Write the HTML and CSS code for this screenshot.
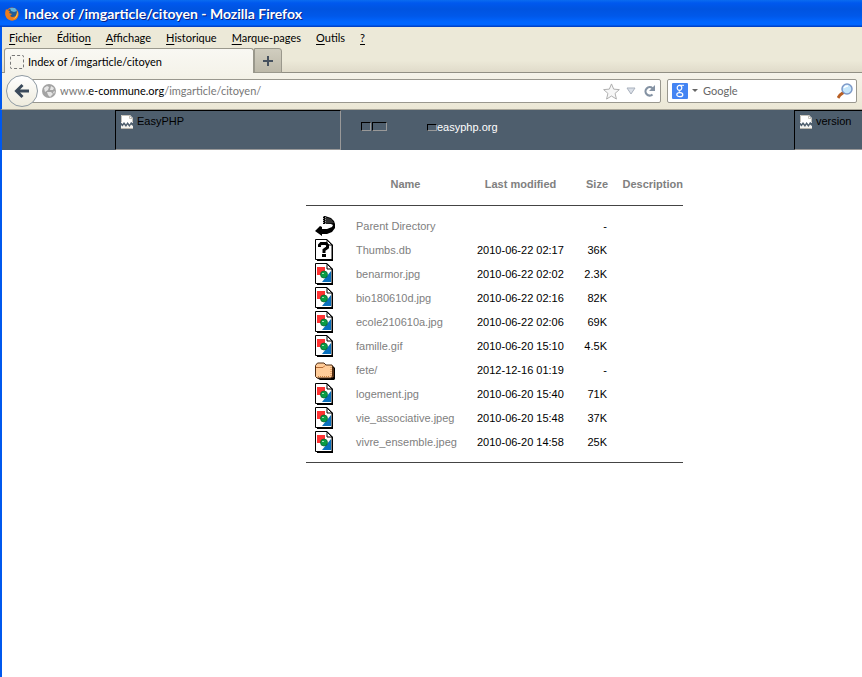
FILE: index.html
```html
<!DOCTYPE html>
<html lang="fr">
<head>
<meta charset="utf-8">
<title>Index of /imgarticle/citoyen</title>
<link rel="stylesheet" href="styles.css">
</head>
<body>
<svg class="defs" aria-hidden="true">
  <symbol id="broken" viewBox="0 0 12 14">
    <path d="M0 0h9l3 3v5l-2-1-1.500 2.500L6.500 7 5 9.500 3 7 1.500 9 0 7.500z" fill="#fff"/>
    <path d="M.5 7V.5h8l3 3V7M8.500.5v3h3" fill="none" stroke="#c4c1b9"/>
    <path d="M0 10l1.500 1.500L3 9.500l2 2.500 1.500-2.500 2 2.500L10 9.500l2 1.500v3H0z" fill="#f4f3ef"/>
    <path d="M0 13.500h12" stroke="#b7b4ac"/>
  </symbol>
  <symbol id="sheet" viewBox="0 0 20 22">
    <path d="M2 20h15V6h1v16H2z" fill="#000"/>
    <path d="M.5.5h11.500l5 5v15H.5z" fill="#fff" stroke="#000"/>
    <path d="M12 .5V6h5.500M12 1l5 5" fill="none" stroke="#000"/>
  </symbol>
  <symbol id="image" viewBox="0 0 20 22">
    <use href="#sheet" width="20" height="22"/>
    <path d="M2 4h8v8H2z" fill="#f33"/>
    <path d="M16 8v11H7z" fill="#0870bd"/>
    <circle cx="9" cy="11.500" r="3.500" fill="#0a9d45" stroke="#075c28" stroke-width=".7"/>
    <path d="M7 10.500h2" stroke="#9fe0b4"/>
  </symbol>
  <symbol id="unknown" viewBox="0 0 20 22">
    <use href="#sheet" width="20" height="22"/>
    <path d="M4.500 8V6l1.500-1.500h5L12.500 6v2.500L9 11v3" fill="none" stroke="#000" stroke-width="3"/>
    <path d="M7 15h4v3H7z"/>
  </symbol>
  <symbol id="back" viewBox="0 0 20 22">
    <path d="M8 1h2l6 2 3 3 1 3v4l-3 4-5 2H7v2l-7-5 5-5 2 1v2h5l5-2 1-2-2-1H8z" fill="#000"/>
    <path d="M10 2l6 2 3 4-9 1z" fill="#333"/>
    <path d="M8.500 1v8M10.500 2v7" stroke="#999" stroke-dasharray="1 1"/>
  </symbol>
  <symbol id="folder" viewBox="0 0 20 22">
    <path d="M3 7h15l2 2v11l-1 1H5l-3-2z" fill="#000"/>
    <path d="M16 7l2.500 2v9L16 19z" fill="#a65e28"/>
    <path d="M.5 6.500l2-2.500H9l2 2h6l.5 1v10l-1.500 2H2L.5 17.500z" fill="#fc9" stroke="#4d2a12"/>
    <path d="M1 8.500h7l2-2" fill="none" stroke="#b76b34"/>
    <path d="M3 17.500h12M16 8v9" stroke="#c9803f" stroke-dasharray="1 1"/>
  </symbol>
</svg>
<header class="chrome">
  <div class="titlebar">
    <svg class="fox" viewBox="0 0 14 14" aria-hidden="true">
      <circle cx="7" cy="7" r="6.500" fill="#e9761b"/>
      <circle cx="7.500" cy="5.500" r="4.500" fill="#235c96"/>
      <path d="M5 1l5 0 2 3-3 1-3-1z" fill="#63b5dc"/>
      <path d="M1 2l2 2 2 0-1 2 3 1-2 2 2 1.500c4 1 6-2 5.500-6C15 10 11 14 7 13.500 1 13-1 8 1 2z" fill="#ee7d1d"/>
      <path d="M12 4c2 4-1 8-4 8 2-1 4-3 4-8z" fill="#ffd34a"/>
    </svg>
    <span>Index of /imgarticle/citoyen - Mozilla Firefox</span>
  </div>
  <nav class="menu">
    <button><u>F</u>ichier</button>
    <button>Éditio<u>n</u></button>
    <button><u>A</u>ffichage</button>
    <button><u>H</u>istorique</button>
    <button><u>M</u>arque-pages</button>
    <button><u>O</u>utils</button>
    <button><u>?</u></button>
  </nav>
  <div class="tabs">
    <button class="tab"><span class="favicon"></span>Index of /imgarticle/citoyen</button>
    <button class="newtab" aria-label="Nouvel onglet"><svg viewBox="0 0 10 10"><path d="M5 0v10M0 5h10" stroke="#46515e" stroke-width="2"/></svg></button>
  </div>
  <div class="toolbar">
    <button class="backbtn" aria-label="Retour"><svg viewBox="0 0 16 16"><path d="M15 8H3M8.500 2L2.500 8l6 6" fill="none" stroke="#3b4a5b" stroke-width="3"/></svg></button>
    <div class="field url" role="textbox" aria-label="Adresse" tabindex="0">
      <svg class="globe" viewBox="0 0 14 14" aria-hidden="true"><circle cx="7" cy="7" r="7" fill="#a3a3a3"/><path d="M2 4l3-2 2 1-1 3-3 2zM9 2l3 2-1 2-3 0zM5 8l4 0 2 2-3 3-2-2zM11 8l2-1-1 3z" fill="#e6e6e6"/></svg>
      <span class="address">www.<b>e-commune.org</b>/imgarticle/citoyen/</span>
      <svg class="star" viewBox="0 0 18 18" aria-hidden="true"><path d="M9 1l2.300 5.500 6 .5-4.500 4 1.400 6L9 13.800 3.800 17l1.400-6L.7 7l6-.5z" fill="#f7f7f7" stroke="#aaa"/></svg>
      <svg class="down" viewBox="0 0 10 8" aria-hidden="true"><path d="M1 1h8L5 7z" fill="#dbe0e8" stroke="#a9b1bd"/></svg>
      <svg class="reload" viewBox="0 0 12 12" aria-hidden="true"><path d="M9.500 3.200A4.200 4.200 0 1 0 9.500 9.500" fill="none" stroke="#8492a3" stroke-width="2.200"/><path d="M12 0v6H6z" fill="#8492a3"/></svg>
    </div>
    <div class="field search">
      <svg class="engine" viewBox="0 0 16 16" aria-hidden="true"><rect width="16" height="16" rx="1" fill="#4384f3"/><ellipse cx="7.500" cy="4.800" rx="2.300" ry="2.500" fill="none" stroke="#fff" stroke-width="1.200"/><path d="M7.500 2.300H12M8 7.500c-2 1 0 1.500 1.500 2.500" fill="none" stroke="#fff"/><ellipse cx="7.800" cy="11.700" rx="3" ry="2" fill="none" stroke="#fff" stroke-width="1.200"/></svg>
      <svg class="caret" viewBox="0 0 6 4" aria-hidden="true"><path d="M0 0h6L3 3z" fill="#666"/></svg>
      <input type="text" placeholder="Google" aria-label="Recherche">
      <svg class="glass" viewBox="0 0 16 16" aria-hidden="true"><path d="M1 15l2-3 4-3" fill="none" stroke="#b85f24" stroke-width="3"/><circle cx="10" cy="6" r="5" fill="#c5e6fb" stroke="#7d99c8" stroke-width="1.500"/><path d="M7 5c1-2 3-2 4-2" stroke="#fff" stroke-width="1.500" fill="none"/></svg>
    </div>
  </div>
</header>
<main class="page">
  <div class="banner">
    <div class="missing"><svg><use href="#broken"/></svg>EasyPHP</div>
    <div class="links"><i class="slot"></i><i class="slot wide"></i></div>
    <a class="site" href="#"><i class="slot"></i>easyphp.org</a>
    <div class="missing last"><svg><use href="#broken"/></svg>version</div>
  </div>
  <table class="listing">
    <thead>
      <tr><th class="icon"></th><th class="name"><a href="#">Name</a></th><th class="date"><a href="#">Last modified</a></th><th class="size"><a href="#">Size</a></th><th class="desc"><a href="#">Description</a></th></tr>
    </thead>
    <tbody>
      <tr><td class="icon"><svg><use href="#back"/></svg></td><td><a href="#">Parent Directory</a></td><td></td><td class="size">-</td><td></td></tr>
      <tr><td class="icon"><svg><use href="#unknown"/></svg></td><td><a href="#">Thumbs.db</a></td><td>2010-06-22 02:17</td><td class="size">36K</td><td></td></tr>
      <tr><td class="icon"><svg><use href="#image"/></svg></td><td><a href="#">benarmor.jpg</a></td><td>2010-06-22 02:02</td><td class="size">2.3K</td><td></td></tr>
      <tr><td class="icon"><svg><use href="#image"/></svg></td><td><a href="#">bio180610d.jpg</a></td><td>2010-06-22 02:16</td><td class="size">82K</td><td></td></tr>
      <tr><td class="icon"><svg><use href="#image"/></svg></td><td><a href="#">ecole210610a.jpg</a></td><td>2010-06-22 02:06</td><td class="size">69K</td><td></td></tr>
      <tr><td class="icon"><svg><use href="#image"/></svg></td><td><a href="#">famille.gif</a></td><td>2010-06-20 15:10</td><td class="size">4.5K</td><td></td></tr>
      <tr><td class="icon"><svg><use href="#folder"/></svg></td><td><a href="#">fete/</a></td><td>2012-12-16 01:19</td><td class="size">-</td><td></td></tr>
      <tr><td class="icon"><svg><use href="#image"/></svg></td><td><a href="#">logement.jpg</a></td><td>2010-06-20 15:40</td><td class="size">71K</td><td></td></tr>
      <tr><td class="icon"><svg><use href="#image"/></svg></td><td><a href="#">vie_associative.jpeg</a></td><td>2010-06-20 15:48</td><td class="size">37K</td><td></td></tr>
      <tr><td class="icon"><svg><use href="#image"/></svg></td><td><a href="#">vivre_ensemble.jpeg</a></td><td>2010-06-20 14:58</td><td class="size">25K</td><td></td></tr>
    </tbody>
  </table>
</main>
</body>
</html>
```
FILE: styles.css
```css
* { box-sizing: border-box; }
body {
  margin: 0;
  min-height: 100vh;
  display: flex;
  flex-direction: column;
  background: #fff;
  color: #000;
  font: 11px/16px Lato, "Noto Sans", sans-serif;
}
button { margin: 0; padding: 0; border: 0; background: none; color: inherit; font: inherit; }
a { color: inherit; text-decoration: none; }
svg { flex: none; display: block; }
.defs { display: none; }

.titlebar {
  height: 27px;
  padding: 0 5px;
  display: flex;
  align-items: center;
  gap: 5px;
  background: linear-gradient(#0a6cf0 0, #0058ee 3px, #0054e0 9px, #0058ea 16px, #0066ff 22px, #0066ff 25px, #0043c8 26px);
  color: #fff;
  font: bold 14px/16px Lato, "Noto Sans", sans-serif;
  text-shadow: 1px 1px #0a1f80;
}
.fox { width: 14px; height: 14px; }

.menu {
  border-left: 2px solid #0058ee;
  height: 21px;
  padding: 0 7px;
  display: flex;
  align-items: center;
  gap: 15px;
  background: #ece9d8;
}
.menu u { text-underline-offset: 2px; }

.tabs {
  height: 25px;
  border-left: 2px solid #0058ee;
  padding-left: 2px;
  display: flex;
  background: linear-gradient(#ece9d8 50%, #dfdac9);
  box-shadow: inset 0 -1px #918f84;
}
.tab {
  width: 250px;
  display: flex;
  align-items: center;
  gap: 4px;
  padding: 2px 5px 0;
  border: 1px solid #9a988c;
  border-bottom: 0;
  border-radius: 3px 3px 0 0;
  background: linear-gradient(#f9f8f3, #f5f3ea);
}
.favicon { width: 14px; height: 14px; border: 1px dashed #777; border-radius: 2px; }
.newtab {
  width: 28px;
  display: grid;
  place-items: center;
  border: 1px solid #9a988c;
  border-radius: 0 3px 0 0;
  background: linear-gradient(#d0cdbf, #bdb9a9);
}
.newtab svg { width: 10px; height: 10px; }

.toolbar {
  height: 37px;
  border-left: 2px solid #0058ee;
  border-bottom: 1px solid #aaa79a;
  padding: 0 5px 0 4px;
  display: flex;
  align-items: center;
  background: linear-gradient(#f5f3ea, #ebe7d5);
}
.backbtn {
  z-index: 1;
  flex: none;
  width: 32px;
  height: 32px;
  display: grid;
  place-items: center;
  border: 1px solid #8f9aa3;
  border-radius: 50%;
  background: linear-gradient(#fff, #eeebdd);
}
.backbtn svg { width: 16px; height: 16px; }
.field {
  height: 24px;
  display: flex;
  align-items: center;
  border: 1px solid #99978e;
  border-radius: 2px;
  background: #fff;
}
.url { flex: 1; margin-left: -8px; padding: 0 5px 0 11px; color: #777; }
.url b { color: #000; font-weight: normal; }
.globe { width: 14px; height: 14px; }
.address { flex: 1; margin-left: 4px; }
.star { width: 17px; height: 17px; }
.down { width: 10px; height: 8px; margin-left: 6px; }
.reload { width: 12px; height: 12px; margin-left: 7px; }
.search { width: 190px; margin-left: 6px; padding: 0 3px 0 4px; }
.engine { width: 16px; height: 16px; }
.caret { width: 6px; height: 4px; margin: 0 5px 0 4px; }
.search input { flex: 1; min-width: 0; padding: 0; border: 0; outline: 0; background: none; font: inherit; }
.search input::placeholder { color: #666; opacity: 1; }
.glass { width: 16px; height: 16px; }

.page {
  flex: 1;
  border-left: 2px solid #0058ee;
  font: 11px/14px "Liberation Sans", Arial, sans-serif;
}
.banner { height: 40px; padding-left: 113px; display: flex; background: #4e5e6d; }
.missing {
  width: 226px;
  display: flex;
  align-items: flex-start;
  gap: 4px;
  padding: 4px 5px;
  border: 1px solid;
  border-color: #000 #999 #999 #000;
  line-height: 12px;
}
.missing svg { width: 12px; height: 14px; }
.last { width: 68px; margin-left: auto; border-right: 0; }
.links { display: flex; gap: 1px; padding: 12px 0 0 20px; }
.slot { width: 10px; height: 9px; border: 1px solid; border-color: #000 #999 #999 #000; }
.wide { width: 15px; }
.site { display: flex; align-items: center; margin-left: 40px; padding-bottom: 6px; color: #fff; }
.site .slot { height: 7px; }

.listing {
  width: 377px;
  margin: 13px 0 0 304px;
  border-collapse: collapse;
  table-layout: fixed;
}
.listing th, .listing td { padding: 0; height: 24px; }
.listing th { height: 42px; }
.listing thead, .listing tbody { border-bottom: 1px solid #444; }
.listing tbody tr:first-child td { height: 33px; padding-top: 9px; }
.listing tbody tr:last-child td { height: 32px; padding-bottom: 8px; }
.listing a { color: #808080; }
.listing .icon { width: 50px; padding-left: 9px; }
.listing .icon svg { width: 20px; height: 22px; }
.listing .name { width: 121px; padding-right: 22px; }
.listing .date { width: 87px; }
.listing .size { width: 44px; text-align: right; }
.listing td.size { padding-right: 1px; }
.listing .desc { text-align: right; }
```
